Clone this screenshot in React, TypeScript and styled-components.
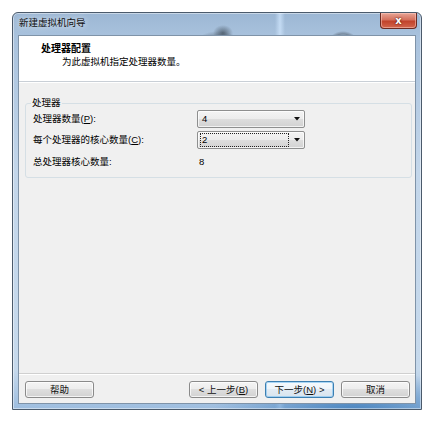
import React from "react";
import styled, { createGlobalStyle } from "styled-components";

const GlobalStyle = createGlobalStyle`
  html, body { margin: 0; padding: 0; background: #ffffff; }
  body {
    font-family: "Liberation Sans", "Noto Sans CJK SC", sans-serif;
    font-size: 9.5px;
    color: #000;
  }
  * { box-sizing: border-box; }
`;

const Page = styled.div`
  padding: 12px 0 0 12px;
`;

const Window = styled.div`
  width: 410px;
  height: 398px;
  border: 1px solid #4b5a6b;
  border-radius: 6px 6px 0 0;
  padding: 0 5px 5px 5px;
  display: flex;
  flex-direction: column;
  background:
    radial-gradient(ellipse 22px 12px at 205px 30px, rgba(40, 50, 60, 0.75), rgba(40, 50, 60, 0) 100%),
    radial-gradient(ellipse 10px 8px at 210px 20px, rgba(40, 50, 60, 0.6), rgba(40, 50, 60, 0) 100%),
    radial-gradient(circle at 330px 36px, rgba(60, 70, 80, 0) 13px, rgba(60, 70, 80, 0.45) 15px, rgba(60, 70, 80, 0) 18px),
    radial-gradient(ellipse 140px 40px at 340px 398px, rgba(70, 130, 190, 0.95), rgba(70, 130, 190, 0) 100%),
    linear-gradient(90deg, rgba(255,255,255,0) 262px, rgba(210,232,255,0.7) 267px, rgba(255,255,255,0) 272px),
    linear-gradient(180deg, #9cb7d4 0%, #a9c2dd 6%, #c3d6ea 40%, #c6d9ec 90%, #9dbddf 100%);
  box-shadow: inset 0 0 0 1px rgba(255, 255, 255, 0.45);
`;

const TitleBar = styled.div`
  height: 22px;
  display: flex;
  align-items: flex-start;
`;

const TitleText = styled.span`
  flex: 1;
  padding: 4px 0 0 1px;
  font-size: 9.5px;
  line-height: 12px;
  color: #111;
  text-shadow: 0 0 6px rgba(255, 255, 255, 0.9);
`;

const CloseButton = styled.div`
  width: 37px;
  height: 16px;
  margin-right: -1px;
  border: 1px solid #6b2a22;
  border-top: none;
  border-radius: 0 0 4px 4px;
  background: linear-gradient(180deg, #e8a596 0%, #d4705d 45%, #c1432c 55%, #d2664d 100%);
  box-shadow: inset 0 0 0 1px rgba(255, 210, 200, 0.5);
  display: flex;
  align-items: center;
  justify-content: center;
  color: #fff;
  font-family: "DejaVu Sans", sans-serif;
  font-weight: bold;
  font-size: 10px;
  line-height: 10px;
  text-shadow: 0 0 2px #5a1a10, 0 0 1px #5a1a10;
`;

const Client = styled.div`
  flex: 1;
  border: 1px solid #7f93a8;
  background: #f0f0f0;
  display: flex;
  flex-direction: column;
`;

const Header = styled.div`
  height: 46px;
  background: #ffffff;
  border-bottom: 1px solid #c9cfd6;
  padding: 6px 0 0 22px;
  display: flex;
  flex-direction: column;
`;

const HeaderTitle = styled.div`
  font-weight: bold;
  font-size: 10px;
  line-height: 13px;
`;

const HeaderSub = styled.div`
  padding-left: 21px;
  font-size: 9.5px;
  line-height: 13px;
`;

const Body = styled.div`
  flex: 1;
  border-top: 1px solid #ffffff;
  padding: 14px 3px 0 6px;
`;

const GroupBox = styled.fieldset`
  margin: 0;
  padding: 1px 7px 5px 7px;
  border: 1px solid #d5dfe5;
  border-radius: 3px;
  min-width: 0;
`;

const Legend = styled.legend`
  padding: 0 1px;
  margin-left: -2px;
  font-size: 9.5px;
  line-height: 12px;
`;

const Grid = styled.div`
  display: grid;
  grid-template-columns: 164px 108px;
  grid-template-rows: 18px 18px 20px;
  row-gap: 3px;
  align-items: center;
`;

const Label = styled.span`
  font-size: 9.5px;
  line-height: 12px;
`;

const Value = styled.span`
  padding-left: 2px;
  font-size: 9.5px;
  line-height: 12px;
`;

const Combo = styled.div`
  height: 18px;
  border: 1px solid #8e8f8f;
  border-radius: 2px;
  background: linear-gradient(180deg, #f4f4f4 0%, #ececec 50%, #dedede 50%, #d2d2d2 100%);
  box-shadow: inset 0 0 0 1px rgba(255, 255, 255, 0.7);
  display: flex;
  align-items: center;
  padding: 0 4px 0 2px;
`;

const ComboText = styled.span<{ $focus?: boolean }>`
  flex: 1;
  height: 14px;
  margin-right: 5px;
  padding-left: 1px;
  font-size: 9.5px;
  line-height: 12px;
  border: 1px dotted ${(p) => (p.$focus ? "#222" : "transparent")};
`;

const Arrow = () => (
  <svg width="6" height="4" viewBox="0 0 6 4">
    <path d="M0 0 H6 L3 3.5 Z" fill="#111" />
  </svg>
);

const Footer = styled.div`
  border-top: 1px solid #d0d0d0;
  box-shadow: inset 0 1px 0 #ffffff;
  padding: 7px 5px 5px 6px;
  display: flex;
  align-items: center;
`;

const Spacer = styled.div`
  flex: 1;
`;

const ButtonGroup = styled.div`
  display: flex;
  gap: 7px;
`;

const Button = styled.div<{ $default?: boolean }>`
  width: 69px;
  height: 17px;
  border: 1px solid ${(p) => (p.$default ? "#3c7fb1" : "#8a8a8a")};
  border-radius: 3px;
  background: ${(p) =>
    p.$default
      ? "linear-gradient(180deg, #f6fafd 0%, #eef4f9 50%, #e2ebf3 50%, #d8e4ee 100%)"
      : "linear-gradient(180deg, #f4f4f4 0%, #ececec 50%, #dedede 50%, #d2d2d2 100%)"};
  box-shadow: inset 0 0 0 1px ${(p) => (p.$default ? "rgba(120, 190, 240, 0.6)" : "rgba(255, 255, 255, 0.75)")};
  display: flex;
  align-items: center;
  justify-content: center;
  font-size: 9.5px;
  line-height: 12px;
  color: #111;
`;

const U = styled.span`
  text-decoration: underline;
`;

export default function App() {
  return (
    <>
      <GlobalStyle />
      <Page>
        <Window>
          <TitleBar>
            <TitleText>新建虚拟机向导</TitleText>
            <CloseButton>x</CloseButton>
          </TitleBar>
          <Client>
            <Header>
              <HeaderTitle>处理器配置</HeaderTitle>
              <HeaderSub>为此虚拟机指定处理器数量。</HeaderSub>
            </Header>
            <Body>
              <GroupBox>
                <Legend>处理器</Legend>
                <Grid>
                  <Label>
                    处理器数量(<U>P</U>):
                  </Label>
                  <Combo>
                    <ComboText>4</ComboText>
                    <Arrow />
                  </Combo>
                  <Label>
                    每个处理器的核心数量(<U>C</U>):
                  </Label>
                  <Combo>
                    <ComboText $focus>2</ComboText>
                    <Arrow />
                  </Combo>
                  <Label>总处理器核心数量:</Label>
                  <Value>8</Value>
                </Grid>
              </GroupBox>
            </Body>
            <Footer>
              <Button>帮助</Button>
              <Spacer />
              <ButtonGroup>
                <Button>
                  &lt; 上一步(<U>B</U>)
                </Button>
                <Button $default>
                  下一步(<U>N</U>) &gt;
                </Button>
                <Button>取消</Button>
              </ButtonGroup>
            </Footer>
          </Client>
        </Window>
      </Page>
    </>
  );
}
